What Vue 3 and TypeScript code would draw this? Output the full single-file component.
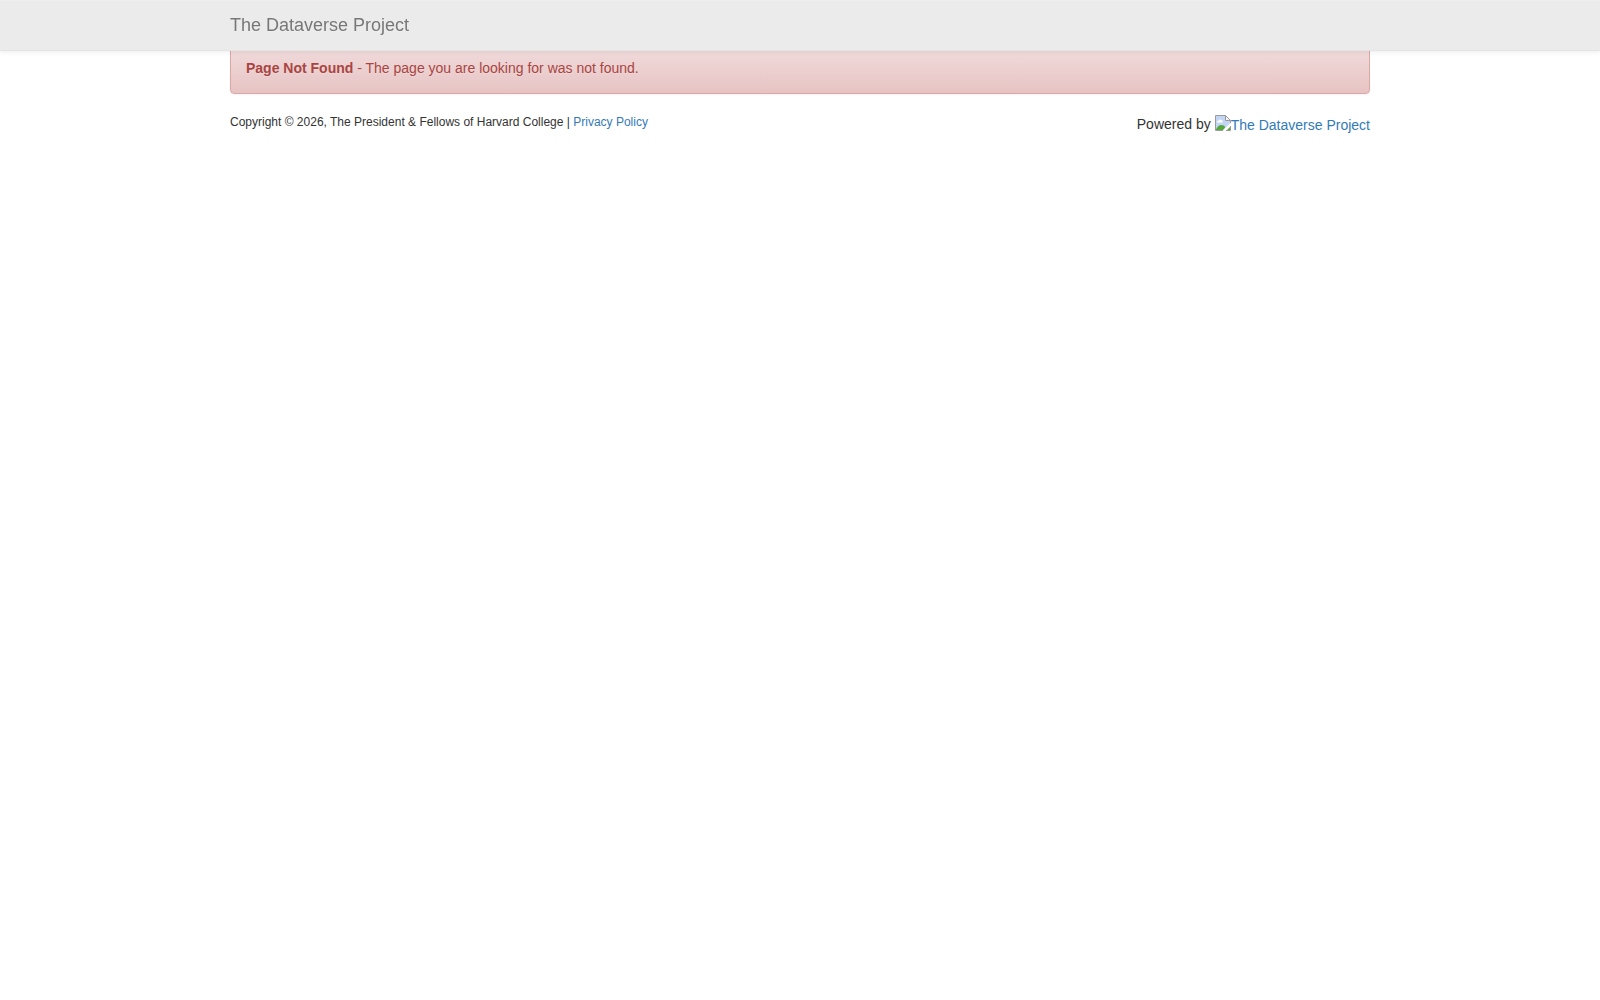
<script setup lang="ts">
const siteName: string = 'The Dataverse Project'
const year: number = 2026
</script>

<template>
  <div class="page">
    <header class="navbar">
      <div class="container">
        <a class="brand" href="#">{{ siteName }}</a>
      </div>
    </header>

    <main class="container">
      <div class="alert" role="alert">
        <strong>Page Not Found</strong> - The page you are looking for was not found.
      </div>
    </main>

    <footer class="container footer">
      <p class="copyright">
        Copyright © {{ year }}, The President &amp; Fellows of Harvard College |
        <a href="#">Privacy Policy</a>
      </p>
      <div class="powered">
        <span>Powered by</span>
        <a class="powered-link" href="#">
          <svg class="missing" viewBox="0 0 16 16" width="16" height="16" aria-hidden="true">
            <path d="M1 1h9.500l4.500 4.500v3L8.500 15H1z" fill="#c3d5f5" />
            <path d="M2 7.500c-.2-1.400.8-2 1.700-1.800C4 4.200 6 4 6.500 5.300c1.200-.2 1.700 1.200 1 2.200z" fill="#fff" />
            <path d="M1 14.500c1-2.500 3-4.500 5.500-4.500 1.800 0 3 .8 3.700 2.200L8 15H1z" fill="#56a83b" />
            <path d="M10.500 1v4.500H15z" fill="#f5f5f5" />
            <path d="M8 15.500H.5V.5h10l5 5v3M10.500.5v5h5" fill="none" stroke="#9a9a9a" />
            <path d="M16 7.500v2L9.500 16H7.500z" fill="#fff" />
            <path d="M15.500 11v4.500H11" fill="none" stroke="#9a9a9a" />
            <path d="M12 15l3-3v3z" fill="#56a83b" />
          </svg>
          <span>{{ siteName }}</span>
        </a>
      </div>
    </footer>
  </div>
</template>

<style>
body {
  margin: 0;
  background: #fff;
}
</style>

<style scoped>
.page {
  padding-top: 42px;
  color: #333;
  font-family: "Helvetica Neue", Helvetica, "Liberation Sans", Arial, sans-serif;
  font-size: 14px;
  line-height: 20px;
}

.container {
  box-sizing: border-box;
  max-width: 1170px;
  margin: 0 auto;
  padding: 0 15px;
}

.navbar {
  position: fixed;
  z-index: 10;
  top: 0;
  left: 0;
  right: 0;
  border-bottom: 1px solid #e4e4e4;
  background: #ebebeb;
  box-shadow: inset 0 1px 0 rgba(255, 255, 255, 0.15), 0 1px 5px rgba(0, 0, 0, 0.075);
}

.brand {
  display: inline-block;
  padding: 15px 0;
  color: #777;
  font-size: 18px;
  line-height: 20px;
  text-decoration: none;
  text-shadow: 0 1px 0 rgba(255, 255, 255, 0.25);
  vertical-align: top;
}

.alert {
  margin-bottom: 20px;
  padding: 15px;
  border: 1px solid #dca7a7;
  border-radius: 4px;
  background: linear-gradient(to bottom, #f2dede 0%, #e7c3c3 100%);
  box-shadow: inset 0 1px 0 rgba(255, 255, 255, 0.25), 0 1px 2px rgba(0, 0, 0, 0.05);
  color: #a94442;
  text-shadow: 0 1px 0 rgba(255, 255, 255, 0.2);
}

.footer {
  display: flex;
  justify-content: space-between;
  align-items: flex-start;
}

.footer a {
  color: #337ab7;
  text-decoration: none;
}

.copyright {
  margin: 0;
  font-size: 12px;
  line-height: 16px;
}

.powered {
  display: flex;
  gap: 4px;
}

.powered-link {
  display: flex;
  padding-top: 1px;
}

.missing {
  display: block;
}
</style>
